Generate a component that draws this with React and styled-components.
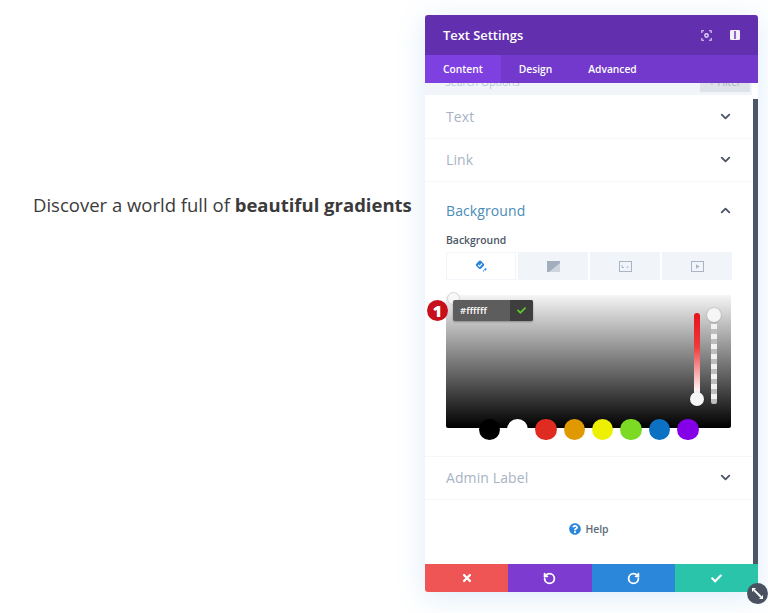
import React from 'react';
import styled, { createGlobalStyle } from 'styled-components';
import { ChevronDown, ChevronUp, RotateCcw, RotateCw } from 'lucide-react';
import { FaTimes, FaCheck, FaQuestionCircle } from 'react-icons/fa';

const Global = createGlobalStyle`
  html, body { margin: 0; padding: 0; background: #fff; }
  body { font-family: "Open Sans", "Liberation Sans", sans-serif; }
  * { box-sizing: border-box; }
`;
const Page = styled.div`
  width: 768px; height: 613px; display: flex; overflow: hidden; background: #fff;
`;
const Lead = styled.div`
  width: 425px; padding: 192px 0 0 33px; font-size: 18.5px; line-height: 26px; color: #3b3b3b; white-space: nowrap;
  b { font-weight: 700; }
`;
const Panel = styled.div`
  position: relative; width: 333px; height: 577px; margin-top: 15px; display: flex; flex-direction: column;
  border-radius: 3px; background: #fff; box-shadow: 0 5px 30px rgba(43,135,218,.16);
`;
const Header = styled.div`
  height: 40px; flex: none; display: flex; align-items: center; justify-content: space-between; padding: 0 18px 0 18px;
  background: #6230ae; border-radius: 3px 3px 0 0; color: #fff;
`;
const Title = styled.div`font-size: 12.9px; font-weight: 600;`;
const HeaderIcons = styled.div`display: flex; gap: 18px; align-items: center;`;
const Tabs = styled.div`height: 28px; flex: none; display: flex; background: #7239cc; position: relative; z-index: 1;`;
const Tab = styled.div`
  padding: 0 18px; display: flex; align-items: center; font-size: 10.25px; font-weight: 600; color: #fff;
  background: ${p => (p.$active ? '#7f40e2' : 'transparent')};
`;
const Search = styled.div`
  height: 12px; flex: none; display: flex; justify-content: space-between; align-items: flex-end; overflow: hidden;
  margin-right: 6px; padding: 0 2px 0 20px; background: #f1f5f9;
`;
const SearchText = styled.div`font-size: 10.5px; line-height: 14px; height: 14px; margin-bottom: 6px; color: #bcc6d3;`;
const Filter = styled.div`
  width: 50px; height: 23px; margin-bottom: 3px; padding-top: 6px; text-align: center; font-size: 10px; line-height: 14px; background: #dde3e9; color: #a8b2bf;
`;
const Body = styled.div`flex: 1; display: flex; min-height: 0;`;
const Content = styled.div`flex: 1; display: flex; flex-direction: column;`;
const Scrollbar = styled.div`width: 5px; margin-top: 4px; background: #4c5666; flex: none;`;
const Row = styled.div`
  height: 43.5px; flex: none; display: flex; align-items: center; justify-content: space-between; padding: 0 20px 0 21px;
  border-bottom: 1px solid #f5f7f9; font-size: 14px; letter-spacing: .1px; color: #a8b3c2;
  svg { color: #4c5666; }
`;
const Section = styled.div`
  height: 274.5px; flex: none; padding: 0 20px 0 21px; border-bottom: 1px solid #f5f7f9;
`;
const SectionHead = styled.div`
  height: 58px; padding-bottom: 2px; display: flex; align-items: center; justify-content: space-between; font-size: 14px; letter-spacing: .1px; color: #4b8cb8;
  svg { color: #4c5666; }
`;
const FieldLabel = styled.div`font-size: 10.4px; font-weight: 600; line-height: 12px; margin-top: -6px; color: #4c5666;`;
const TypeTabs = styled.div`display: grid; grid-template-columns: repeat(4, 70px); gap: 2px; margin-top: 6px;`;
const TypeTab = styled.div`
  height: 28px; display: flex; align-items: center; justify-content: center;
  background: ${p => (p.$active ? '#fff' : '#f1f5f9')};
  border: ${p => (p.$active ? '1px solid #f1f5f9' : '0')};
`;
const Picker = styled.div`
  position: relative; margin-top: 15px; width: 285px; height: 133px; border-radius: 2px;
  background: linear-gradient(#f5f5f5 0%, #000 100%);
`;
const Handle = styled.div`
  position: absolute; left: 1px; top: -3px; width: 13px; height: 13px; border-radius: 50%; background: #f8f8f8; border: 1px solid #d4d4d4;
`;
const Badge = styled.div`
  position: absolute; left: -19px; top: 5px; width: 21px; height: 21px; border-radius: 50%; background: #c8101c; color: #fff;
  display: flex; align-items: center; justify-content: center; font-size: 16px; font-weight: 800;
`;
const HexBox = styled.div`
  position: absolute; left: 7px; top: 5px; width: 80px; height: 21px; display: flex; border-radius: 2px; background: #5d5d5d; color: #fff;
  font-size: 9.5px; font-weight: 600; box-shadow: 0 1px 2px rgba(0,0,0,.3);
`;
const HexValue = styled.div`flex: 1; display: flex; align-items: center; padding: 0 0 1px 7px;`;
const HexOk = styled.div`width: 23px; display: flex; align-items: center; justify-content: center; background: #3e3e3e; color: #5fc72d; border-radius: 0 2px 2px 0;`;
const HueTrack = styled.div`
  position: absolute; left: 248px; top: 18px; width: 6px; height: 84px; border-radius: 3px; background: linear-gradient(#e8121a 0%, #ee3a3a 40%, #fff 95%);
`;
const AlphaTrack = styled.div`
  position: absolute; left: 265px; top: 19px; width: 6px; height: 90px; border-radius: 2px;
  background: repeating-linear-gradient(#f2f2f2 0 5px, #bdbdbd 5px 10px);
`;
const Knob = styled.div`
  position: absolute; left: ${p => p.$x}px; top: ${p => p.$y}px; width: 14px; height: 14px; border-radius: 50%; background: #f6f6f6; box-shadow: 0 0 2px rgba(0,0,0,.25);
`;
const Swatches = styled.div`
  display: flex; gap: 7.1px; margin: -9px 0 0 32.5px; position: relative;
`;
const Swatch = styled.div`width: 21.3px; height: 21.3px; border-radius: 50%; background: ${p => p.$c};`;
const Help = styled.div`
  flex: 1; padding: 0 0 6px 0; display: flex; align-items: center; justify-content: center; gap: 4px; font-size: 10.4px; font-weight: 600; color: #5d6a78;
  svg { color: #2b87da; }
`;
const Footer = styled.div`height: 28px; flex: none; display: flex; border-radius: 0 0 3px 3px; overflow: hidden;`;
const Action = styled.div`
  flex: 1; display: flex; align-items: center; justify-content: center; color: #fff; background: ${p => p.$c};
`;
const Resize = styled.div`
  position: absolute; right: -10px; bottom: -12px; width: 21px; height: 21px; border-radius: 50%; background: #4a5261; color: #fff;
  display: flex; align-items: center; justify-content: center;
`;

const FocusIcon = () => (
  <svg width="11" height="11" viewBox="0 0 11 11" fill="none" stroke="#e4d8f8" strokeWidth="1.1">
    <path d="M3 .8H.8V3M8 .8h2.2V3M3 10.2H.8V8M8 10.2h2.2V8" />
    <circle cx="5.5" cy="5.5" r="1.7" strokeWidth="1.4" />
  </svg>
);
const SplitIcon = () => (
  <svg width="10" height="10" viewBox="0 0 10 10">
    <rect width="10" height="10" rx="1.2" fill="#f3eefb" />
    <path d="M4.3 1v8h1.4V1z" fill="#6230ae" />
  </svg>
);
const BucketIcon = () => (
  <svg width="12" height="12" viewBox="0 0 12 12" fill="none">
    <rect x="1.6" y="1.4" width="6.8" height="6.8" rx="1.6" transform="rotate(45 5 4.8)" fill="#2b87da" />
    <path d="M3.2 5 4.6 6.4 7 3.6" stroke="#fff" strokeWidth="1.1" />
    <circle cx="10.4" cy="9.4" r="1.1" fill="#2b87da" />
    <circle cx="8.6" cy="10.9" r=".7" fill="#2b87da" />
  </svg>
);
const GradientIcon = () => (
  <svg width="13" height="11" viewBox="0 0 13 11"><rect width="13" height="11" fill="#a3aebc" /><path d="M13 2v9H2Z" fill="#cdd4dd" /></svg>
);
const ImageIcon = () => (
  <svg width="13" height="11" viewBox="0 0 13 11" fill="none" stroke="#a9b5c4"><rect x=".5" y=".5" width="12" height="10" /><path d="M3 4v2.5h2M7.5 6.5 9 5.5l1 1" /></svg>
);
const VideoIcon = () => (
  <svg width="13" height="11" viewBox="0 0 13 11" fill="none" stroke="#a9b5c4"><rect x=".5" y=".5" width="12" height="10" /><path d="M5 3.2v4.6l3.6-2.3Z" fill="#a9b5c4" stroke="none" /></svg>
);
const ResizeIcon = () => (
  <svg width="13" height="13" viewBox="0 0 13 13" fill="none" stroke="#fff">
    <path d="M3 3l7 7" strokeWidth="1.8" />
    <path d="M1 1h4L1 5ZM12 12H8l4-4Z" fill="#fff" stroke="none" />
  </svg>
);

const colors = ['#000', '#fff', '#e02b20', '#e09900', '#edf000', '#7cda24', '#0c71c3', '#8300e9'];
const chevron = { size: 15, strokeWidth: 3 };

export default function App() {
  return (
    <Page>
      <Global />
      <Lead>Discover a world full of <b>beautiful gradients</b></Lead>
      <Panel>
        <Header>
          <Title>Text Settings</Title>
          <HeaderIcons><FocusIcon /><SplitIcon /></HeaderIcons>
        </Header>
        <Tabs>
          <Tab $active>Content</Tab>
          <Tab>Design</Tab>
          <Tab>Advanced</Tab>
        </Tabs>
        <Search>
          <SearchText>Search Options</SearchText>
          <Filter>+ Filter</Filter>
        </Search>
        <Body>
          <Content>
            <Row>Text<ChevronDown {...chevron} /></Row>
            <Row>Link<ChevronDown {...chevron} /></Row>
            <Section>
              <SectionHead>Background<ChevronUp {...chevron} /></SectionHead>
              <FieldLabel>Background</FieldLabel>
              <TypeTabs>
                <TypeTab $active><BucketIcon /></TypeTab>
                <TypeTab><GradientIcon /></TypeTab>
                <TypeTab><ImageIcon /></TypeTab>
                <TypeTab><VideoIcon /></TypeTab>
              </TypeTabs>
              <Picker>
                <Handle />
                <Badge>1</Badge>
                <HexBox>
                  <HexValue>#ffffff</HexValue>
                  <HexOk><FaCheck size={9} /></HexOk>
                </HexBox>
                <HueTrack />
                <AlphaTrack />
                <Knob $x={244} $y={97} />
                <Knob $x={261} $y={13} />
              </Picker>
              <Swatches>
                {colors.map(c => <Swatch key={c} $c={c} />)}
              </Swatches>
            </Section>
            <Row>Admin Label<ChevronDown {...chevron} /></Row>
            <Help><FaQuestionCircle size={12} />Help</Help>
          </Content>
          <Scrollbar />
        </Body>
        <Footer>
          <Action $c="#ef5555"><FaTimes size={12} /></Action>
          <Action $c="#7d3bcf"><RotateCcw size={13} strokeWidth={3.4} /></Action>
          <Action $c="#2b87da"><RotateCw size={13} strokeWidth={3.4} /></Action>
          <Action $c="#29c4a9"><FaCheck size={11} /></Action>
        </Footer>
        <Resize><ResizeIcon /></Resize>
      </Panel>
    </Page>
  );
}
